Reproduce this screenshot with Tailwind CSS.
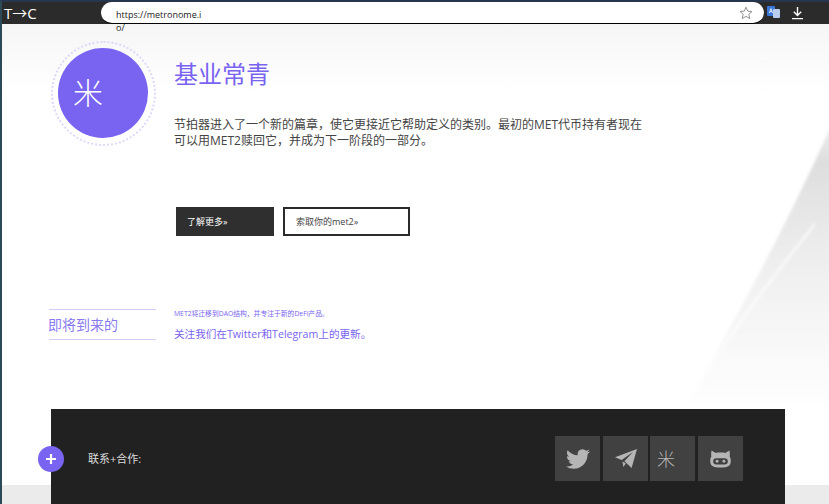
<!DOCTYPE html>
<html lang="zh-CN">
<head>
  <meta charset="UTF-8" />
  <meta name="viewport" content="width=device-width, initial-scale=1.0" />
  <title>Metronome</title>
  <script src="https://cdn.jsdelivr.net/npm/@tailwindcss/browser@4"></script>
</head>
<body class="w-[829px] h-[504px] overflow-hidden bg-white antialiased font-['Open_Sans','Noto_Sans_CJK_SC',sans-serif]">
  <div class="relative h-[504px] overflow-hidden border-l-[2px] border-t-[2px] border-l-[#2b4a55] border-t-[#26364f]">

    <!-- background sweep, behind everything -->
    <svg class="absolute inset-0" width="829" height="504" viewBox="0 0 829 504">
      <defs>
        <linearGradient id="sweep" x1="0" y1="0" x2="0" y2="1">
          <stop offset="0" stop-color="#ececec" />
          <stop offset="0.15" stop-color="#dedede" />
          <stop offset="0.55" stop-color="#f1f1f1" />
          <stop offset="1" stop-color="#ffffff" />
        </linearGradient>
        <linearGradient id="top" x1="0" y1="0" x2="0" y2="1">
          <stop offset="0" stop-color="#f5f5f5" />
          <stop offset="1" stop-color="#ffffff" />
        </linearGradient>
        <filter id="soft"><feGaussianBlur stdDeviation="1.5" /></filter>
      </defs>
      <rect x="0" y="20" width="829" height="70" fill="url(#top)" />
      <path d="M832 118 C795 200 745 300 680 410 L832 410 Z" fill="url(#sweep)" filter="url(#soft)" />
      <path d="M813 222 C775 270 730 325 683 407" fill="none" stroke="#fff" stroke-opacity="0.7" stroke-width="2.5" filter="url(#soft)" />
      <rect x="0" y="483" width="829" height="21" fill="#ebebeb" />
    </svg>

    <header class="relative z-10 h-[22px] bg-[#2b2b2b] flex items-center">
      <span class="w-[99px] pl-[2px] text-[15px] text-white leading-none">T→C</span>
      <div class="w-[663px] h-[22px] rounded-full bg-white border-b border-black relative flex items-center">
        <span class="ml-[15px] w-[86px] mt-[3px] h-[13px] leading-[13px] text-[9px] text-[#222] break-all">https://metronome.io/</span>
        <svg class="absolute right-[11px] top-[4px]" width="14" height="14" viewBox="0 0 24 24" fill="none" stroke="#8a8a8a" stroke-width="1.6" stroke-linejoin="round">
          <path d="M12 2l3 6.8 7.2.7-5.4 4.9 1.6 7.2L12 17.8l-6.4 3.8 1.6-7.2L1.8 9.5 9 8.8z" />
        </svg>
      </div>
      <svg class="ml-[3px] mt-[-2px]" width="13" height="14" viewBox="0 0 13 14">
        <rect x="0" y="1" width="8" height="10" rx="1" fill="#3b78d8" />
        <rect x="6" y="4" width="7" height="9" rx="1" fill="#b9cdf0" />
        <path d="M2.4 8l1.6-4.4L5.6 8M3 6.6h2" fill="none" stroke="#fff" stroke-width="0.8" />
      </svg>
      <svg class="ml-[11px]" width="13" height="14" viewBox="0 0 13 14" fill="none" stroke="#fff" stroke-width="1.4">
        <path d="M6.5 1v8M2.800 5.800l3.700 3.700 3.700-3.700M1 12.600h11" />
      </svg>
    </header>

    <main class="relative">
      <section class="flex pl-[49px] pt-[17px]">
        <div class="w-[105px] h-[105px] shrink-0 rounded-full border-2 border-dotted border-[#dcd8fb] flex items-center justify-center">
          <div class="mr-[1px] mb-[1px] w-[90px] h-[90px] rounded-full bg-[#7864f0] flex items-center pl-[15px] text-[30px] leading-none text-white font-light">米</div>
        </div>
        <div class="ml-[18px]">
          <h1 class="mt-[16px] h-[34px] text-[24px] leading-[34px] text-[#7864f0]">基业常青</h1>
          <p class="mt-[26px] w-[475px] text-[12px] leading-[16px] text-[#444]">节拍器进入了一个新的篇章，使它更接近它帮助定义的类别。最初的MET代币持有者现在可以用MET2赎回它，并成为下一阶段的一部分。</p>
          <div class="mt-[58px] ml-[2px] flex gap-[9px]">
            <a class="w-[98px] h-[29px] bg-[#2f2f2f] pl-[11px] flex items-center text-[9px] text-white">了解更多»</a>
            <a class="w-[127px] h-[29px] border-2 border-[#2b2b2b] bg-white pl-[11px] flex items-center text-[9px] text-[#444]">索取你的met2»</a>
          </div>
        </div>
      </section>

      <section class="flex pl-[47px] mt-[73px]">
        <div class="w-[107px] h-[31px] border-y border-[#d3cdf8] flex items-center">
          <h2 class="ml-[-1px] text-[14px] text-[#8a7af0] leading-none">即将到来的</h2>
        </div>
        <div class="ml-[18px]">
          <p class="mt-[-1px] text-[6.8px] leading-[12px] text-[#7864f0]">MET2将迁移到DAO结构，并专注于新的DeFi产品。</p>
          <p class="mt-[6px] text-[10.6px] leading-[16px] text-[#7864f0]">关注我们在Twitter和Telegram上的更新。</p>
        </div>
      </section>

      <footer class="relative ml-[49px] mt-[67px] w-[734px] h-[110px] bg-[#212121] flex items-start pt-[27px] pl-[37px]">
        <button class="absolute left-[-13px] top-[37px] w-[26px] h-[26px] rounded-full bg-[#7864f0] flex items-center justify-center">
          <svg width="10" height="10" viewBox="0 0 10 10" stroke="#fff" stroke-width="2.2"><path d="M5 0v10M0 5h10" /></svg>
        </button>
        <span class="mt-[1px] h-[45px] flex items-center text-[11px] text-[#ddd]">联系+合作:</span>
        <nav class="ml-auto mr-[42px] flex gap-[3px]">
          <a class="w-[45px] h-[45px] bg-[#414141] flex items-center justify-center">
            <svg width="24" height="24" viewBox="0 0 24 24" fill="#b5b5b5"><path d="M23.953 4.57a10 10 0 01-2.825.775 4.958 4.958 0 002.163-2.723c-.951.555-2.005.959-3.127 1.184a4.92 4.92 0 00-8.384 4.482C7.69 8.095 4.067 6.13 1.64 3.162a4.822 4.822 0 00-.666 2.475c0 1.71.87 3.213 2.188 4.096a4.904 4.904 0 01-2.228-.616v.06a4.923 4.923 0 003.946 4.827 4.996 4.996 0 01-2.212.085 4.936 4.936 0 004.604 3.417 9.867 9.867 0 01-6.102 2.105c-.39 0-.779-.023-1.17-.067a13.995 13.995 0 007.557 2.209c9.053 0 13.998-7.496 13.998-13.985 0-.21 0-.42-.015-.63A9.935 9.935 0 0024 4.59z" /></svg>
          </a>
          <a class="w-[45px] h-[45px] bg-[#414141] flex items-center justify-center">
            <svg width="22" height="20" viewBox="0 0 22 20" fill="#b5b5b5"><path d="M22 0L0 8.200l6.600 2.800L18 3 9.400 12.200 16.600 19z" /><path d="M7.400 12.400l1 5.600 2.400-3.400z" /></svg>
          </a>
          <a class="ml-[-1px] w-[45px] h-[45px] bg-[#414141] flex items-center pl-[7px] text-[18px] leading-none text-[#b5b5b5] font-light">米</a>
          <a class="w-[45px] h-[45px] bg-[#414141] flex items-center justify-center">
            <svg width="21" height="18" viewBox="0 0 24 21"><path fill="#b5b5b5" d="M1.500 0.500L6.500 3.500C9 2.800 15 2.800 17.500 3.500L22.500 0.500C23 3 23 6 22.700 7.500C23.600 9 24 10.500 24 13C24 18 21 20.500 12 20.500C3 20.500 0 18 0 13C0 10.500 .4 9 1.300 7.500C1 6 1 3 1.500 .5Z" /><rect x="3.500" y="9.500" width="17" height="7.500" rx="3.750" fill="#414141" /><circle cx="8" cy="13.200" r="1.700" fill="#b5b5b5" /><circle cx="16" cy="13.200" r="1.700" fill="#b5b5b5" /></svg>
          </a>
        </nav>
      </footer>
    </main>
  </div>
</body>
</html>
